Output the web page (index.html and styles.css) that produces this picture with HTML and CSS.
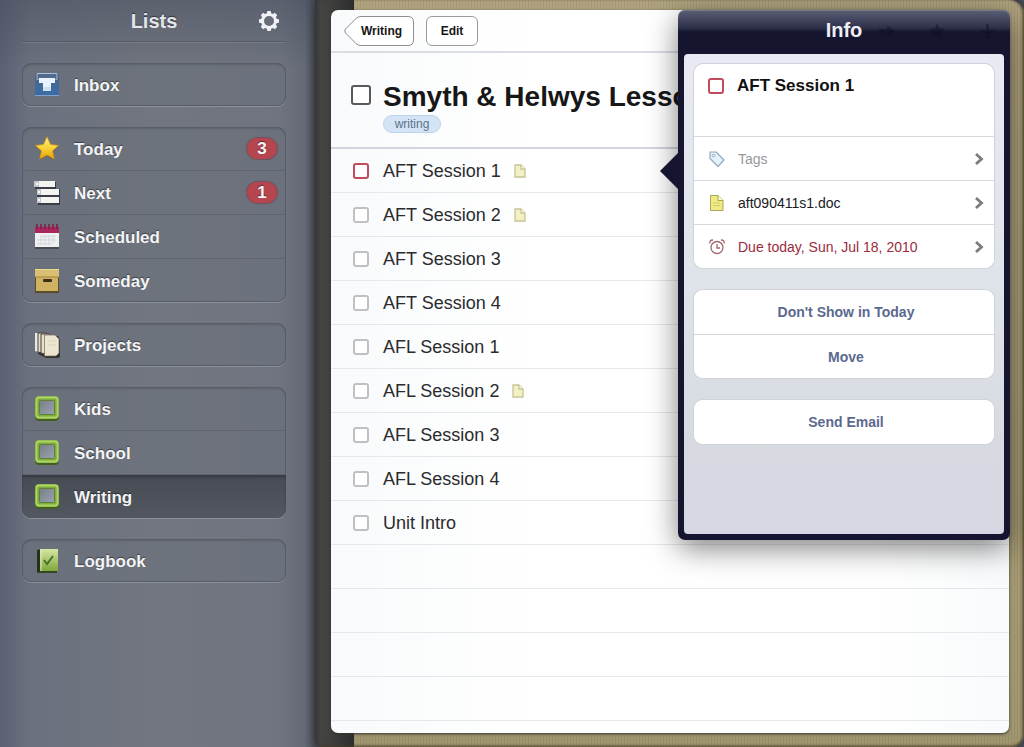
FILE: index.html
```html
<!doctype html>
<html lang="en">
  <head>
    <meta charset="UTF-8" />
    <meta name="viewport" content="width=device-width, initial-scale=1.0" />
    <title>Lists</title>
    <link rel="stylesheet" href="styles.css">
  </head>
  <body>
    <svg class="defs" width="0" height="0" aria-hidden="true">
      <defs>
        <linearGradient id="g-blue" x2="0" y2="1"><stop stop-color="#48688f" /><stop offset="1" stop-color="#3b6ba8" /></linearGradient>
        <linearGradient id="g-gold" x2="0" y2="1"><stop stop-color="#ffee8a" /><stop offset=".5" stop-color="#f9d437" /><stop offset="1" stop-color="#e69f08" /></linearGradient>
        <linearGradient id="g-book" x2="0" y2="1"><stop stop-color="#d8e6a4" /><stop offset="1" stop-color="#7da83a" /></linearGradient>
        <linearGradient id="g-inner" x2="1" y2="1"><stop stop-color="#777f86" /><stop offset="1" stop-color="#9ba2b4" /></linearGradient>
        <symbol id="area" viewBox="0 0 26 26">
          <rect x="1" y="2" width="24" height="23" rx="4" fill="#41621f" />
          <rect x="1" y="0" width="24" height="23" rx="4" fill="#7dab3e" />
          <rect x="2.500" y="1.500" width="21" height="20" rx="2.500" fill="none" stroke="#b0d365" stroke-width="1.800" />
          <rect x="5.500" y="4.500" width="15" height="14" rx="1" fill="url(#g-inner)" stroke="#5f8232" />
        </symbol>
        <symbol id="note" viewBox="0 0 14 16">
          <path d="M2 2h6l4 4v8H2z" fill="#f2f1c6" stroke="#c6c592" stroke-width="1.300" />
          <path d="M8 2v4h4" fill="#fffff0" stroke="#c6c592" stroke-width="1.300" />
        </symbol>
        <symbol id="chevron" viewBox="0 0 10 14">
          <path d="M2 2l5.500 5L2 12" fill="none" stroke="#7b7b80" stroke-width="2.800" />
        </symbol>
      </defs>
    </svg>

    <nav class="sidebar">
      <header class="sidebar-header">
        <h1>Lists</h1>
        <button class="settings" aria-label="Settings">
          <svg width="22" height="22" viewBox="0 0 22 22">
            <g fill="#f0f1f4">
              <rect x="9" y="1" width="4" height="20" rx="1" />
              <rect x="9" y="1" width="4" height="20" rx="1" transform="rotate(45 11 11)" />
              <rect x="9" y="1" width="4" height="20" rx="1" transform="rotate(90 11 11)" />
              <rect x="9" y="1" width="4" height="20" rx="1" transform="rotate(135 11 11)" />
              <circle cx="11" cy="11" r="8" />
            </g>
            <circle cx="11" cy="11" r="5" fill="#666c79" />
          </svg>
        </button>
      </header>

      <div class="groups">
        <div class="group">
          <a class="item" href="#inbox">
            <svg class="icon" viewBox="0 0 26 26">
              <path d="M2 1h22l1 8v15H1V9z" fill="#3a5272" />
              <path d="M3 1.500h20V8H3z" fill="#50698c" stroke="#a9c2de" />
              <path d="M1 8h24v15H1z" fill="url(#g-blue)" />
              <path d="M1 23h24v1H1z" fill="#7ea3cd" />
              <path d="M5 6h16v5h-4v8H9v-8H5z" fill="#eaf3fc" />
              <path d="M9 15h8v4H9z" fill="#cfe0f2" />
            </svg>
            <span class="name">Inbox</span>
          </a>
        </div>

        <div class="group">
          <a class="item" href="#today">
            <svg class="icon" viewBox="0 0 26 26">
              <path d="M13 2l3.500 7.500 8 1-6 5.500 1.700 8L13 20l-7.200 4 1.700-8-6-5.500 8-1z" fill="#46402f" opacity=".6" />
              <path d="M13 .8l3.500 7.700 8 1-6 5.500 1.700 8L13 19l-7.200 4 1.700-8-6-5.500 8-1z" fill="url(#g-gold)" stroke="#d39a14" stroke-width=".8" />
            </svg>
            <span class="name">Today</span>
            <span class="badge">3</span>
          </a>
          <a class="item" href="#next">
            <svg class="icon" viewBox="0 0 26 26">
              <path d="M1 2h21v7h4v16H4v-7H3V9H1z" fill="#393d45" />
              <path d="M0 1h21v6H0zM3 9h22v6H3zM3 17h22v6H3z" fill="#f4f4f3" />
              <path d="M0 1h5v6H0zM3 9h4v6H3zM3 17h4v6H3z" fill="#c3c7c9" />
              <path d="M2 3h2v2H2zM4 11h2v2H4zM4 19h2v2H4z" fill="#fff" />
            </svg>
            <span class="name">Next</span>
            <span class="badge">1</span>
          </a>
          <a class="item" href="#scheduled">
            <svg class="icon" viewBox="0 0 26 26">
              <path d="M1 6h24v19H1z" fill="#474b54" />
              <path d="M1 3h24v20H1z" fill="#eff0f1" />
              <path d="M1 3h24v6H1z" fill="#a9285b" />
              <path d="M3 0v5M7 0v5M11 0v5M15 0v5M19 0v5M23 0v5" stroke="#7b1d45" stroke-width="1.500" />
              <path d="M7 12h15M3 16h19M3 20h15M7 12v9M11 12v9M15 12v9M19 12v7" stroke="#d2d5d8" fill="none" />
            </svg>
            <span class="name">Scheduled</span>
          </a>
          <a class="item" href="#someday">
            <svg class="icon" viewBox="0 0 26 26">
              <path d="M1 3h24v22H1z" fill="#5c4d28" />
              <path d="M2 9h22v14H2z" fill="#d0b263" />
              <path d="M1 1h24v8H1z" fill="#d9be73" />
              <path d="M1 1h24v1H1z" fill="#efd98f" />
              <path d="M1 9h24" stroke="#a48539" />
              <rect x="9" y="11" width="9" height="3" rx="1" fill="#37301d" />
            </svg>
            <span class="name">Someday</span>
          </a>
        </div>

        <div class="group">
          <a class="item" href="#projects">
            <svg class="icon" viewBox="0 0 26 26">
              <path d="M4 4h20l2 4v17l-2 1H12l-8-4z" fill="#35322f" />
              <path d="M1 1h7v20l-7-2z" fill="#e9e7df" />
              <path d="M4 1h8v21l-8-2z" fill="#e3dcc8" stroke="#45423d" />
              <path d="M7 2h9v21l-9-2z" fill="#e9e0c9" stroke="#45423d" />
              <path d="M10.500 3H21l4 4v14l-3 3H10.500z" fill="#eee5d0" stroke="#706a5e" stroke-width=".7" />
              <path d="M14 9h8M14 13h8" stroke="#ddd3bc" />
            </svg>
            <span class="name">Projects</span>
          </a>
        </div>

        <div class="group">
          <a class="item" href="#kids"><svg class="icon"><use href="#area" /></svg><span class="name">Kids</span></a>
          <a class="item" href="#school"><svg class="icon"><use href="#area" /></svg><span class="name">School</span></a>
          <a class="item selected" href="#writing" aria-current="page"><svg class="icon"><use href="#area" /></svg><span class="name">Writing</span></a>
        </div>

        <div class="group">
          <a class="item" href="#logbook">
            <svg class="icon" viewBox="0 0 26 26">
              <path d="M3 2h20v23H3z" fill="#35451f" />
              <path d="M3 2l4-1v22l-4 1z" fill="#26301d" />
              <path d="M6 1h18v22H6z" fill="url(#g-book)" />
              <path d="M7 1v22" stroke="#e3edc2" />
              <path d="M10 12l3 4 6-8" fill="none" stroke="#4c6f2e" stroke-width="2" />
            </svg>
            <span class="name">Logbook</span>
          </a>
        </div>
      </div>
    </nav>

    <main class="notebook">
      <article class="page">
        <div class="toolbar">
          <button class="back">
            <svg class="back-shape" viewBox="0 0 70 30" preserveAspectRatio="none">
              <path d="M12 2.500Q14 .5 17 .5H64Q69.500 .5 69.500 6V24Q69.500 29.500 64 29.500H17Q14 29.500 12 27.500L1.500 17Q0 15 1.500 13z" fill="#fff" stroke="#8e8e92" />
            </svg>
            <span>Writing</span>
          </button>
          <button class="edit">Edit</button>
        </div>

        <header class="project">
          <input type="checkbox" class="check large" id="project" />
          <div class="project-text">
            <h2><label for="project">Smyth &amp; Helwys Lessons</label></h2>
            <span class="tag">writing</span>
          </div>
        </header>

        <ul class="tasks">
          <li><input type="checkbox" class="check due" id="t1" /><label for="t1">AFT Session 1</label><svg class="note"><use href="#note" /></svg></li>
          <li><input type="checkbox" class="check" id="t2" /><label for="t2">AFT Session 2</label><svg class="note"><use href="#note" /></svg></li>
          <li><input type="checkbox" class="check" id="t3" /><label for="t3">AFT Session 3</label></li>
          <li><input type="checkbox" class="check" id="t4" /><label for="t4">AFT Session 4</label></li>
          <li><input type="checkbox" class="check" id="t5" /><label for="t5">AFL Session 1</label></li>
          <li><input type="checkbox" class="check" id="t6" /><label for="t6">AFL Session 2</label><svg class="note"><use href="#note" /></svg></li>
          <li><input type="checkbox" class="check" id="t7" /><label for="t7">AFL Session 3</label></li>
          <li><input type="checkbox" class="check" id="t8" /><label for="t8">AFL Session 4</label></li>
          <li><input type="checkbox" class="check" id="t9" /><label for="t9">Unit Intro</label></li>
        </ul>
      </article>

      <aside class="popover" aria-label="Info">
        <header class="popover-header">
          <h2>Info</h2>
          <!-- toolbar buttons showing through the header -->
          <svg class="ghosts" width="120" height="20" viewBox="0 0 120 20" fill="#0c0d24" aria-hidden="true">
            <path d="M0 8h8V4l8 6-8 6v-4H0z" />
            <path d="M58 2l2 5 6 1-4 4 1 6-5-3-5 3 1-6-4-4 6-1z" />
            <path d="M107 3h3v6h5v3h-5v6h-3v-6h-5V9h5z" />
          </svg>
        </header>
        <div class="popover-body">
          <div class="card">
            <div class="card-title">
              <input type="checkbox" class="check due" id="info-task" />
              <label for="info-task">AFT Session 1</label>
            </div>
            <button class="row placeholder">
              <svg class="row-icon" viewBox="0 0 18 18">
                <path d="M2 2h6l8 8-6 6.500-8-8z" fill="#e3f1fa" stroke="#91aabb" stroke-linejoin="round" stroke-width="1.200" />
                <circle cx="5.500" cy="5.500" r="1.300" fill="#fff" stroke="#91aabb" />
              </svg>
              <span>Tags</span>
              <svg class="chevron"><use href="#chevron" /></svg>
            </button>
            <button class="row">
              <svg class="row-icon" viewBox="0 0 18 18">
                <path d="M2.500 1.500H10l5 5v10H2.500z" fill="#efea85" stroke="#a9a955" />
                <path d="M10 1.500v5h5" fill="#fbfad0" stroke="#a9a955" />
                <path d="M5 9h7M5 11.500h7" stroke="#d3ce6c" />
              </svg>
              <span>aft090411s1.doc</span>
              <svg class="chevron"><use href="#chevron" /></svg>
            </button>
            <button class="row overdue">
              <svg class="row-icon" viewBox="0 0 18 18" fill="none" stroke="#a2666d" stroke-width="1.300">
                <circle cx="9" cy="9.500" r="6" />
                <path d="M9 6v4h3M2 5.500Q1 2 5 2M16 5.500Q17 2 13 2" />
              </svg>
              <span>Due today, Sun, Jul 18, 2010</span>
              <svg class="chevron"><use href="#chevron" /></svg>
            </button>
          </div>
          <div class="card">
            <button class="row action">Don't Show in Today</button>
            <button class="row action">Move</button>
          </div>
          <div class="card">
            <button class="row action">Send Email</button>
          </div>
        </div>
      </aside>
    </main>
  </body>
</html>
```
FILE: styles.css
```css
* {
  box-sizing: border-box;
}
body {
  display: flex;
  margin: 0;
  min-height: 100vh;
  background: #4b4f58;
  font-family: "Liberation Sans", Arial, Helvetica, sans-serif;
}
h1,
h2,
ul {
  margin: 0;
  padding: 0;
}
button {
  font-family: inherit;
  cursor: pointer;
}
.defs {
  position: absolute;
}

/* sidebar */
.sidebar {
  flex: 0 0 315px;
  padding: 0 29px 22px 22px;
  background:
    linear-gradient(rgba(65, 72, 88, 0.45), transparent 70px),
    linear-gradient(90deg, #5b6171, #6b717f 30px, #71767f 50%, #6f7480 280px, #646975 305px, #4b4f58);
}
.sidebar-header {
  display: grid;
  grid-template-columns: 1fr auto 1fr;
  align-items: center;
  height: 42px;
  border-bottom: 1px solid #565b66;
  box-shadow: 0 1px 0 rgba(255, 255, 255, 0.1);
}
.sidebar-header h1 {
  grid-column: 2;
  color: #e4e6eb;
  font-size: 20px;
  line-height: 24px;
  text-shadow: 0 -1px 1px rgba(0, 0, 0, 0.5);
}
.settings {
  display: flex;
  justify-self: end;
  margin-right: 6px;
  padding: 0;
  border: 0;
  background: none;
}
.groups {
  display: flex;
  flex-direction: column;
  gap: 21px;
  padding-top: 21px;
}
.group {
  overflow: hidden;
  border-radius: 9px;
  background: rgba(106, 111, 121, 0.5);
  box-shadow:
    inset 0 0 0 1px #585d68,
    inset 0 2px 2px rgba(0, 0, 0, 0.15),
    0 1px 0 #8b909b;
}
.item {
  display: flex;
  align-items: center;
  gap: 14px;
  height: 43px;
  padding: 0 9px 0 12px;
  color: #f3f4f6;
  font-size: 17px;
  font-weight: bold;
  text-decoration: none;
  text-shadow: 0 -1px 1px rgba(0, 0, 0, 0.45);
}
.item + .item {
  height: 44px;
  border-top: 1px solid #5f646f;
}
.selected {
  background: linear-gradient(#474b53, #53575f);
  box-shadow: inset 0 2px 3px rgba(0, 0, 0, 0.25);
}
.icon {
  flex: none;
  width: 26px;
  height: 26px;
}
.name {
  padding-top: 2px;
}
.badge {
  min-width: 30px;
  margin-left: auto;
  border-radius: 11px;
  background: #b5464f;
  box-shadow: 0 0 1px 1px rgba(120, 50, 62, 0.5);
  line-height: 21px;
  text-align: center;
}

/* notebook */
.notebook {
  position: relative;
  display: flex;
  flex: 1;
  min-width: 0;
  padding: 10px 15px 14px 16px;
  border-radius: 0 14px 12px 6px;
  background:
    linear-gradient(90deg, #35373a, #444443 6px, #3f403e 16px, #2b2d2d 39px, transparent 39px),
    repeating-linear-gradient(90deg, rgba(90, 75, 40, 0.12) 0 1px, transparent 1px 3px),
    linear-gradient(#b0a480, #a09670);
  box-shadow:
    inset -2px 0 2px rgba(70, 60, 35, 0.6),
    inset 0 -2px 2px rgba(70, 60, 35, 0.5),
    0 0 8px #2b2d33;
}
.page {
  flex: 1;
  display: flex;
  flex-direction: column;
  min-width: 0;
  overflow: hidden;
  border-radius: 7px;
  background: linear-gradient(90deg, #f8fafb, #fff 30%, #fff 80%, #f8fafb);
  box-shadow: 0 1px 3px #33342f;
}
.toolbar {
  display: flex;
  gap: 12px;
  padding: 6px 13px 5px;
  border-bottom: 2px solid #dcdde3;
}
.back,
.edit {
  height: 30px;
  color: #161616;
  font-size: 12px;
  font-weight: bold;
}
.back {
  position: relative;
  width: 70px;
  padding: 0 0 0 5px;
  border: 0;
  background: none;
}
.back span {
  position: relative;
}
.back-shape {
  position: absolute;
  inset: 0;
  width: 100%;
  height: 100%;
}
.edit {
  width: 52px;
  border: 1px solid #9a9a9e;
  border-radius: 6px;
  background: #fff;
}
.check {
  appearance: none;
  flex: none;
  width: 16px;
  height: 16px;
  margin: 0;
  border: 2px solid #bfc0c3;
  border-radius: 3px;
  background: #fff;
}
.check.due {
  border-color: #c14a5d;
}
.check.large {
  width: 20px;
  height: 20px;
  border-color: #59595c;
}
.project {
  display: flex;
  gap: 12px;
  height: 96px;
  padding: 26px 0 0 20px;
  border-bottom: 2px solid #d3d4dc;
}
.project .check {
  margin-top: 6px;
}
.project-text {
  min-width: 0;
  white-space: nowrap;
}
.project h2 {
  color: #171717;
  font-size: 28px;
  line-height: 36px;
}
.tag {
  display: block;
  width: 58px;
  border: 1px solid #bdd3ea;
  border-radius: 9px;
  background: #d3e4f6;
  color: #5d7089;
  font-size: 12px;
  line-height: 16px;
  text-align: center;
}
.tasks {
  flex: 1;
  list-style: none;
  background: repeating-linear-gradient(transparent 0 43px, #e5e8ed 43px 44px);
}
.tasks li {
  display: flex;
  align-items: center;
  height: 44px;
  padding-left: 22px;
  color: #2b2b2d;
  font-size: 18px;
}
.tasks label {
  margin-left: 14px;
}
.note {
  width: 14px;
  height: 16px;
  margin-left: 12px;
}

/* info popover */
.popover {
  position: absolute;
  top: 10px;
  right: 14px;
  width: 332px;
  padding: 0 6px 6px;
  border-radius: 7px;
  background: linear-gradient(#5b5f76, #2d3049 18px, #15152f 22px, #15152f);
  box-shadow:
    inset 0 1px 0 #74788a,
    0 8px 30px rgba(0, 0, 0, 0.5);
}
.popover::before {
  content: "";
  position: absolute;
  top: 142px;
  left: -18px;
  width: 19px;
  height: 38px;
  background: #15152f;
  clip-path: polygon(100% 0, 100% 100%, 0 50%);
}
.popover-header {
  position: relative;
  height: 44px;
}
.popover-header h2 {
  color: #eeeef5;
  font-size: 20px;
  line-height: 41px;
  text-align: center;
}
.ghosts {
  position: absolute;
  top: 11px;
  right: 5px;
  opacity: 0.4;
}
.popover-body {
  display: flex;
  flex-direction: column;
  gap: 22px;
  min-height: 480px;
  padding: 10px;
  border-radius: 4px;
  background: linear-gradient(#e9eaf4, #dfe3ea 45%, #d7dae1 80%, #d5d7e2);
}
.card {
  overflow: hidden;
  border-radius: 9px;
  background: #fff;
  box-shadow: 0 0 0 1px #d0d2da;
}
.card-title {
  display: flex;
  align-items: flex-start;
  gap: 13px;
  height: 72px;
  padding: 14px;
  color: #111;
  font-size: 17px;
  font-weight: bold;
  line-height: 16px;
}
.row {
  display: flex;
  align-items: center;
  width: 100%;
  height: 44px;
  padding: 0 10px 0 14px;
  border: 0;
  background: #fff;
  color: #202024;
  font-size: 14px;
}
.card > * + .row {
  border-top: 1px solid #d6d7de;
}
.row-icon {
  width: 18px;
  height: 18px;
  margin-right: 12px;
}
.chevron {
  width: 10px;
  height: 14px;
  margin-left: auto;
}
.placeholder {
  color: #97979d;
}
.overdue {
  color: #9b2c3c;
}
.action {
  justify-content: center;
  color: #5c698f;
  font-weight: bold;
}
```
